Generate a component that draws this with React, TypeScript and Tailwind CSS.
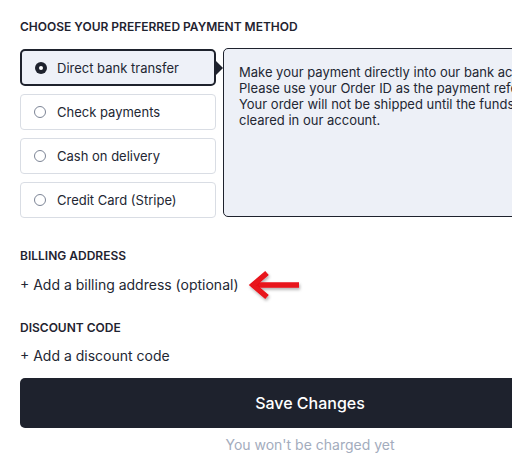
import React from 'react';

const METHODS = ['Direct bank transfer', 'Check payments', 'Cash on delivery', 'Credit Card (Stripe)'];

function Radio({ checked }: { checked: boolean }) {
  return checked ? (
    <span className="w-3 h-3 rounded-full bg-[#1e222d] flex items-center justify-center shrink-0">
      <span className="w-1 h-1 rounded-full bg-white" />
    </span>
  ) : (
    <span className="w-3 h-3 rounded-full border border-[#7d8596] bg-white shrink-0" />
  );
}

export default function App() {
  return (
    <div className="w-[512px] h-[463px] overflow-hidden bg-white" style={{ fontFamily: 'Inter, "Noto Sans", sans-serif' }}>
      <div className="w-[580px] ml-5 pt-[19px]">
        <h2 className="text-[12px] font-semibold text-[#1f2330] leading-4">CHOOSE YOUR PREFERRED PAYMENT METHOD</h2>

        <div className="flex mt-[13px] gap-[7px]">
          {/* Options */}
          <div className="w-[196px] flex flex-col gap-2 pt-px">
            {METHODS.map((m, i) => {
              const sel = i === 0;
              return (
                <div
                  key={m}
                  className={
                    sel
                      ? 'relative h-[37px] flex items-center gap-[10px] pl-[13px] rounded-[5px] border-2 border-[#1e222d] bg-[#eef1f8]'
                      : 'relative h-[36px] flex items-center gap-[11px] pl-[13px] rounded-[4px] border border-[#d9dde4] bg-white'
                  }
                >
                  <Radio checked={sel} />
                  <span className="text-[13px] text-[#232733] leading-4">{m}</span>
                  {sel && (
                    <span className="absolute right-[-9px] top-1/2 -translate-y-1/2 w-0 h-0 border-y-[7px] border-y-transparent border-l-[7px] border-l-[#1e222d]" />
                  )}
                </div>
              );
            })}
          </div>

          {/* Description */}
          <div className="flex-1 h-[169px] rounded-[5px] border border-[#1e222d] bg-[#edf0f7] px-[15px] pt-[15px] text-[13px] leading-4 text-[#232733]">
            Make your payment directly into our bank account.<br />
            Please use your Order ID as the payment reference.<br />
            Your order will not be shipped until the funds have<br />
            cleared in our account.
          </div>
        </div>

        <h2 className="mt-[30px] text-[12px] font-semibold text-[#1f2330] leading-4">BILLING ADDRESS</h2>
        <div className="mt-[13px] flex items-center h-4">
          <span className="text-[14px] text-[#232733] leading-4">+ Add a billing address (optional)</span>
          <svg className="ml-[7px] my-[-10px]" width="60" height="36" viewBox="0 0 60 36" fill="none">
            <defs>
              <filter id="sh" x="-30%" y="-30%" width="160%" height="180%">
                <feDropShadow dx="1" dy="2" stdDeviation="1.8" floodColor="#000" floodOpacity="0.3" />
              </filter>
            </defs>
            <g filter="url(#sh)" stroke="#e8121a" strokeWidth="5.5" strokeLinecap="butt" strokeLinejoin="miter">
              <path d="M53 18H9" />
              <path d="M21 6L7 18l14 12" />
            </g>
          </svg>
        </div>

        <h2 className="mt-[27px] text-[12px] font-semibold text-[#1f2330] leading-4">DISCOUNT CODE</h2>
        <div className="mt-[12px] text-[14px] text-[#232733] leading-4">+ Add a discount code</div>

        <button className="mt-[14px] w-full h-[50px] rounded-[5px] bg-[#1e222d] text-white text-[16px] font-medium">
          Save Changes
        </button>
        <p className="mt-[9px] text-center text-[14px] text-[#a3acbd] leading-4">You won&apos;t be charged yet</p>
      </div>
    </div>
  );
}
